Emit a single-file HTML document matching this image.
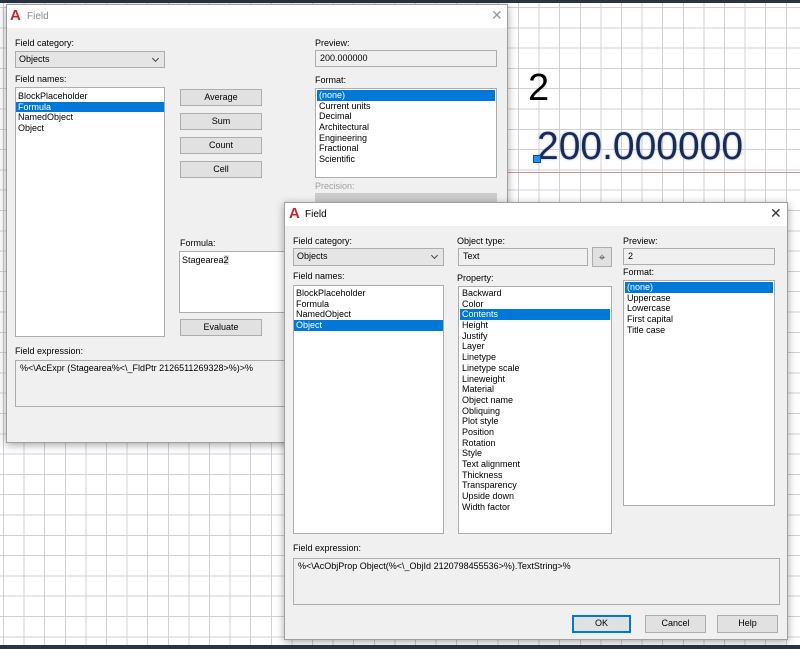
<!DOCTYPE html>
<html><head><meta charset="utf-8"><style>
*{box-sizing:border-box;margin:0;padding:0}
body{width:800px;height:649px;overflow:hidden;position:relative;font-family:"Liberation Sans",sans-serif;font-size:9px;color:#000;background:#fff}
.grid{position:absolute;left:0;top:0;width:800px;height:649px;
background-image:repeating-linear-gradient(90deg,transparent 0 3px,#cfcfd8 3px 4px,transparent 4px 20.6px),repeating-linear-gradient(180deg,transparent 0 7px,#cfcfd8 7px 8px,transparent 8px 20.3px);}
.a{position:absolute}
.dlg{position:absolute;background:#f0f0f0;border:1px solid #a0a0a0;box-shadow:0 2px 8px rgba(0,0,0,.35)}
.tb{position:absolute;left:0;top:0;right:0;height:23px;background:#fff}
.lbl{position:absolute;font-size:9px;color:#000;white-space:nowrap}
.box{position:absolute;background:#fff;border:1px solid #adadad}
.ro{position:absolute;background:#f0f0f0;border:1px solid #adadad;padding:2px 4px;font-size:9px}
.combo{position:absolute;background:#e5e5e5;border:1px solid #adadad;padding:2px 3px;font-size:9px}
.combo:after{content:"";position:absolute;right:6px;top:4px;width:4px;height:4px;border-right:1px solid #444;border-bottom:1px solid #444;transform:rotate(45deg)}
.btn{position:absolute;background:#e1e1e1;border:1px solid #adadad;text-align:center;font-size:9px;line-height:15px}
.list div{height:10.7px;line-height:10.7px;padding-left:2px;white-space:nowrap}
.sel{background:#0078d7;color:#fff}
.logo{position:absolute;font-weight:bold;color:#c4262e;font-size:15px;font-family:"Liberation Sans",sans-serif}
.x{position:absolute;font-size:14px;color:#333}
</style></head><body>
<div class="grid"></div>
<div class="a" style="left:0;top:0;width:800px;height:3px;background:#2b3442"></div>
<div class="a" style="left:0;top:645px;width:800px;height:4px;background:#2b3442"></div>
<div class="a" style="left:508px;top:172px;width:292px;height:1px;background:#d09090"></div>
<div class="a" style="left:528px;top:66px;font-size:38px;color:#000;line-height:44px">2</div>
<div class="a" style="left:537px;top:125px;font-size:39px;color:#1b2a52;line-height:44px;text-shadow:0 0 2px #8fb0e8">200.000000</div>
<div class="a" style="left:533px;top:155px;width:8px;height:8px;background:#1e90ff;border:1px solid #0a4aa0"></div>

<!-- Dialog 1 -->
<div class="dlg" style="left:6px;top:4px;width:502px;height:439px">
 <div class="tb"></div>
 <div class="logo" style="left:3px;top:2px">A</div>
 <div class="lbl" style="left:20px;top:6px;font-size:10px;color:#8a8a8a">Field</div>
 <div class="x" style="left:484px;top:2px;color:#999">✕</div>
 <div class="lbl" style="left:8px;top:33px">Field category:</div>
 <div class="combo" style="left:8px;top:46px;width:150px;height:17px">Objects</div>
 <div class="lbl" style="left:8px;top:69px">Field names:</div>
 <div class="box list" style="left:8px;top:82px;width:150px;height:250px;padding-top:3px">
  <div>BlockPlaceholder</div><div class="sel">Formula</div><div>NamedObject</div><div>Object</div></div>
 <div class="btn" style="left:173px;top:84px;width:82px;height:17px">Average</div>
 <div class="btn" style="left:173px;top:108px;width:82px;height:17px">Sum</div>
 <div class="btn" style="left:173px;top:132px;width:82px;height:17px">Count</div>
 <div class="btn" style="left:173px;top:156px;width:82px;height:17px">Cell</div>
 <div class="lbl" style="left:308px;top:33px">Preview:</div>
 <div class="ro" style="left:308px;top:45px;width:182px;height:17px">200.000000</div>
 <div class="lbl" style="left:308px;top:70px">Format:</div>
 <div class="box list" style="left:308px;top:83px;width:182px;height:90px;padding:1px">
  <div class="sel">(none)</div><div>Current units</div><div>Decimal</div><div>Architectural</div><div>Engineering</div><div>Fractional</div><div>Scientific</div></div>
 <div class="lbl" style="left:308px;top:176px;color:#a0a0a0">Precision:</div>
 <div class="a" style="left:308px;top:188px;width:182px;height:17px;background:#ccc"></div>
 <div class="lbl" style="left:173px;top:233px">Formula:</div>
 <div class="box" style="left:172px;top:246px;width:120px;height:62px;padding:3px 2px">Stagearea<span style="background:#ddd">2</span></div>
 <div class="btn" style="left:173px;top:314px;width:82px;height:17px">Evaluate</div>
 <div class="lbl" style="left:8px;top:341px">Field expression:</div>
 <div class="ro" style="left:8px;top:355px;width:290px;height:47px">%&lt;\AcExpr (Stagearea%&lt;\_FldPtr 2126511269328&gt;%)&gt;%</div>
</div>

<!-- Dialog 2 -->
<div class="dlg" style="left:284px;top:202px;width:504px;height:438px">
 <div class="tb"></div>
 <div class="logo" style="left:4px;top:2px">A</div>
 <div class="lbl" style="left:20px;top:6px;font-size:10px">Field</div>
 <div class="x" style="left:485px;top:2px">✕</div>
 <div class="lbl" style="left:8px;top:33px">Field category:</div>
 <div class="combo" style="left:8px;top:45px;width:151px;height:18px">Objects</div>
 <div class="lbl" style="left:8px;top:68px">Field names:</div>
 <div class="box list" style="left:8px;top:82px;width:151px;height:249px;padding-top:2px">
  <div>BlockPlaceholder</div><div>Formula</div><div>NamedObject</div><div class="sel">Object</div></div>
 <div class="lbl" style="left:172px;top:33px">Object type:</div>
 <div class="ro" style="left:173px;top:45px;width:130px;height:18px">Text</div>
 <div class="btn" style="left:307px;top:44px;width:20px;height:20px;line-height:18px;font-size:12px;color:#555">⌖</div>
 <div class="lbl" style="left:172px;top:70px">Property:</div>
 <div class="box list" style="left:173px;top:83px;width:154px;height:248px;padding:1px">
  <div>Backward</div><div>Color</div><div class="sel">Contents</div><div>Height</div><div>Justify</div><div>Layer</div><div>Linetype</div><div>Linetype scale</div><div>Lineweight</div><div>Material</div><div>Object name</div><div>Obliquing</div><div>Plot style</div><div>Position</div><div>Rotation</div><div>Style</div><div>Text alignment</div><div>Thickness</div><div>Transparency</div><div>Upside down</div><div>Width factor</div></div>
 <div class="lbl" style="left:338px;top:33px">Preview:</div>
 <div class="ro" style="left:338px;top:45px;width:152px;height:17px">2</div>
 <div class="lbl" style="left:338px;top:64px">Format:</div>
 <div class="box list" style="left:338px;top:77px;width:152px;height:226px;padding:1px">
  <div class="sel">(none)</div><div>Uppercase</div><div>Lowercase</div><div>First capital</div><div>Title case</div></div>
 <div class="lbl" style="left:8px;top:340px">Field expression:</div>
 <div class="ro" style="left:8px;top:355px;width:487px;height:47px">%&lt;\AcObjProp Object(%&lt;\_ObjId 2120798455536&gt;%).TextString&gt;%</div>
 <div class="btn" style="left:287px;top:412px;width:59px;height:18px;border:1px solid #0078d7;box-shadow:inset 0 0 0 1px #0078d7">OK</div>
 <div class="btn" style="left:360px;top:412px;width:61px;height:18px">Cancel</div>
 <div class="btn" style="left:432px;top:412px;width:61px;height:18px">Help</div>
</div>
</body></html>
